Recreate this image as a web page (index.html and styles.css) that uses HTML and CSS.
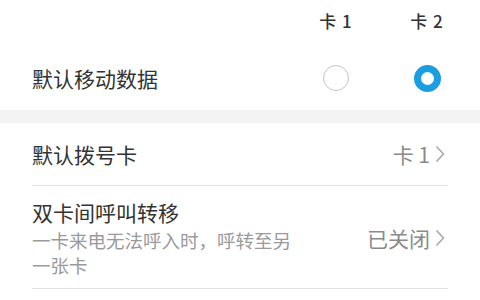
FILE: index.html
```html
<!DOCTYPE html>
<html lang="zh-CN">
<head>
<meta charset="utf-8">
<link rel="stylesheet" href="styles.css">
</head>
<body>
<div class="page">
  <div class="sim-head">
    <span class="col">卡 1</span>
    <span class="col">卡 2</span>
  </div>
  <div class="data-row">
    <span class="title">默认移动数据</span>
    <div class="cols">
      <span class="col"><span class="radio"></span></span>
      <span class="col"><span class="radio on"></span></span>
    </div>
  </div>
  <div class="band"></div>
  <div class="item single">
    <span class="title">默认拨号卡</span>
    <span class="value">卡 1<svg class="chev" width="10" height="18" viewBox="0 0 10 18"><path d="M1.5 1.5 L8.5 9 L1.5 16.5" fill="none" stroke="#a6a6a6" stroke-width="1.5"/></svg></span>
  </div>
  <div class="divider"></div>
  <div class="item double">
    <div class="texts">
      <div class="title">双卡间呼叫转移</div>
      <div class="sub">一卡来电无法呼入时，呼转至另一张卡</div>
    </div>
    <span class="value">已关闭<svg class="chev" width="10" height="18" viewBox="0 0 10 18"><path d="M1.5 1.5 L8.5 9 L1.5 16.5" fill="none" stroke="#a6a6a6" stroke-width="1.5"/></svg></span>
  </div>
  <div class="divider"></div>
</div>
</body>
</html>
```
FILE: styles.css
```css
* { box-sizing: border-box; }
html, body { margin: 0; background: #fff; }
body {
  font-family: "Noto Sans CJK SC", "Noto Sans", sans-serif;
  color: #333;
  width: 480px;
  height: 300px;
  overflow: hidden;
}
.sim-head {
  height: 40px;
  display: flex;
  justify-content: flex-end;
  align-items: center;
  gap: 31px;
  padding-right: 23px;
  font-size: 17px;
  font-weight: 500;
  letter-spacing: 1px;
  color: #333;
}
.col {
  width: 60px;
  display: flex;
  justify-content: center;
  align-items: center;
}
.data-row {
  height: 70px;
  padding: 6px 23px 0 32px;
  display: flex;
  align-items: center;
  justify-content: space-between;
}
.cols { display: flex; gap: 31px; }
.title { font-size: 21px; line-height: 28px; color: #333; }
.radio {
  width: 26px;
  height: 26px;
  border-radius: 50%;
  border: 1.5px solid #c4c4c4;
  display: block;
}
.radio.on {
  width: 27px;
  height: 27px;
  border: 7px solid #1b9de2;
}
.band { height: 13px; background: #f3f3f3; }
.item {
  display: flex;
  align-items: center;
  justify-content: space-between;
  padding: 0 35px 0 32px;
}
.item.single { height: 62px; }
.item.double { padding-top: 12px; padding-bottom: 10px; }
.value {
  display: flex;
  align-items: center;
  gap: 5px;
  font-size: 21px;
  color: #8a8a8a;
}
.chev { display: block; }
.sub {
  margin-top: 2px;
  font-size: 18.5px;
  line-height: 25px;
  color: #9a9a9a;
  max-width: 265px;
}
.divider {
  height: 1px;
  background: #e2e2e2;
  margin: 0 32px;
}
```
